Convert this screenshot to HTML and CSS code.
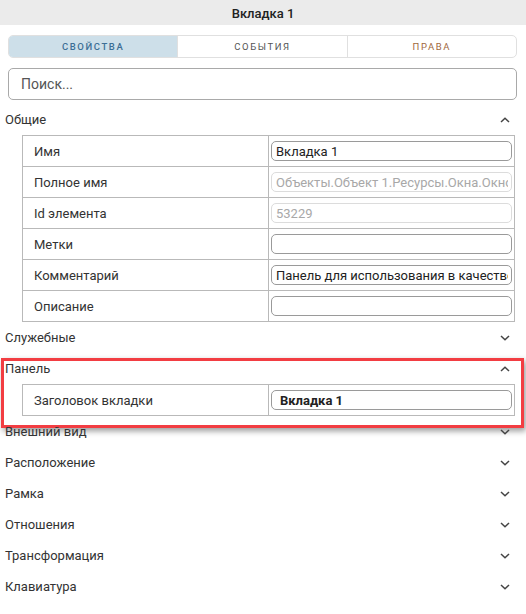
FILE: index.html
```html
<!DOCTYPE html>
<html>
<head>
    <meta charset="utf-8">
    <title>Вкладка 1</title>
    <link rel="stylesheet" href="styles.css">
</head>
<body>
<div class="title-bar">Вкладка 1</div>
<div class="tabs">
    <div class="tab active">Свойства</div>
    <div class="tab">События</div>
    <div class="tab rights">Права</div>
</div>
<div class="search-box">
    <input class="search" type="text" placeholder="Поиск...">
</div>

<div class="group">
    <div class="group-head">Общие
        <svg class="chev" width="10" height="6" viewBox="0 0 10 6"><path d="M1 5L5 1.2L9 5"/></svg>
    </div>
    <table class="props">
        <tr><td class="name">Имя</td><td class="val"><input class="field" value="Вкладка 1"></td></tr>
        <tr><td class="name">Полное имя</td><td class="val"><input class="field" disabled value="Объекты.Объект 1.Ресурсы.Окна.Окно 1.Вкладка 1"></td></tr>
        <tr><td class="name">Id элемента</td><td class="val"><input class="field" disabled value="53229"></td></tr>
        <tr><td class="name">Метки</td><td class="val"><input class="field" value=""></td></tr>
        <tr><td class="name">Комментарий</td><td class="val"><input class="field" value="Панель для использования в качестве вкладки"></td></tr>
        <tr><td class="name">Описание</td><td class="val"><input class="field" value=""></td></tr>
    </table>
</div>

<div class="group">
    <div class="group-head">Служебные
        <svg class="chev" width="10" height="6" viewBox="0 0 10 6"><path d="M1 1L5 4.8L9 1"/></svg>
    </div>
</div>

<div class="group marked">
    <div class="group-head">Панель
        <svg class="chev" width="10" height="6" viewBox="0 0 10 6"><path d="M1 5L5 1.2L9 5"/></svg>
    </div>
    <table class="props">
        <tr><td class="name">Заголовок вкладки</td><td class="val"><input class="field bold" value="Вкладка 1"></td></tr>
    </table>
    <div class="mark"></div>
</div>

<div class="group">
    <div class="group-head">Внешний вид
        <svg class="chev" width="10" height="6" viewBox="0 0 10 6"><path d="M1 1L5 4.8L9 1"/></svg>
    </div>
</div>
<div class="group">
    <div class="group-head">Расположение
        <svg class="chev" width="10" height="6" viewBox="0 0 10 6"><path d="M1 1L5 4.8L9 1"/></svg>
    </div>
</div>
<div class="group">
    <div class="group-head">Рамка
        <svg class="chev" width="10" height="6" viewBox="0 0 10 6"><path d="M1 1L5 4.8L9 1"/></svg>
    </div>
</div>
<div class="group">
    <div class="group-head">Отношения
        <svg class="chev" width="10" height="6" viewBox="0 0 10 6"><path d="M1 1L5 4.8L9 1"/></svg>
    </div>
</div>
<div class="group">
    <div class="group-head">Трансформация
        <svg class="chev" width="10" height="6" viewBox="0 0 10 6"><path d="M1 1L5 4.8L9 1"/></svg>
    </div>
</div>
<div class="group">
    <div class="group-head">Клавиатура
        <svg class="chev" width="10" height="6" viewBox="0 0 10 6"><path d="M1 1L5 4.8L9 1"/></svg>
    </div>
</div>
</body>
</html>
```

FILE: styles.css
```css
* {
    padding: 0;
    margin: 0;
    box-sizing: border-box;
}

body {
    overflow: hidden;
    background-color: #ffffff;
    font-family: Roboto, "Noto Sans", sans-serif;
    font-size: 13px;
    color: #333333;
}

.title-bar {
    height: 25px;
    line-height: 27px;
    background-color: #ebebeb;
    text-align: center;
    font-size: 13px;
    font-weight: 500;
    color: #222222;
}

.tabs {
    display: flex;
    margin: 10px 9px 0 8px;
    height: 23px;
    border: 1px solid #e0e0e0;
    border-radius: 5px;
    overflow: hidden;
}

.tab {
    flex: 1;
    line-height: 21px;
    text-align: center;
    font-size: 9.5px;
    letter-spacing: 1.6px;
    text-transform: uppercase;
    color: #555555;
    border-left: 1px solid #e0e0e0;
}

.tab:first-child {
    border-left: none;
}

.tab.active {
    background-color: #cddfe9;
    color: #3d6f96;
    font-weight: 500;
}

.tab.rights {
    color: #a0683c;
}

.search-box {
    margin: 10px 9px 4px 8px;
}

.search {
    display: block;
    width: 100%;
    height: 32px;
    padding: 0 12px;
    border: 1px solid #a9a9a9;
    border-radius: 5px;
    font-family: inherit;
    font-size: 14px;
    color: #333333;
    outline: none;
}

.search::placeholder {
    color: #555555;
}

.group {
    position: relative;
}

.group-head {
    display: flex;
    align-items: center;
    justify-content: space-between;
    height: 31px;
    padding: 0 16px 0 5px;
    font-size: 13px;
    color: #333333;
}

.chev {
    fill: none;
    stroke: #444444;
    stroke-width: 1.5;
}

.props {
    width: calc(100% - 33px);
    margin-left: 22px;
    border-collapse: collapse;
    table-layout: fixed;
}

.props td {
    height: 31px;
    border: 1px solid #b9b9b9;
}

.props .name {
    padding-left: 11px;
    color: #333333;
}

.props .val {
    padding: 0 2px;
}

.field {
    display: block;
    width: 100%;
    height: 20px;
    padding: 0 3px 0 4px;
    border: 1px solid #9a9a9a;
    border-radius: 5px;
    font-family: inherit;
    font-size: 13px;
    color: #222222;
    background: #ffffff;
    outline: none;
}

.field:disabled {
    border-color: #dcdcdc;
    color: #a8a8a8;
}

.field.bold {
    font-weight: 700;
    padding-left: 8px;
}

.mark {
    position: absolute;
    left: 1px;
    right: 2px;
    top: 5px;
    bottom: -12px;
    border: 3px solid #f23d42;
    box-shadow: 2px 3px 6px rgba(0, 0, 0, 0.4);
    pointer-events: none;
}
```
